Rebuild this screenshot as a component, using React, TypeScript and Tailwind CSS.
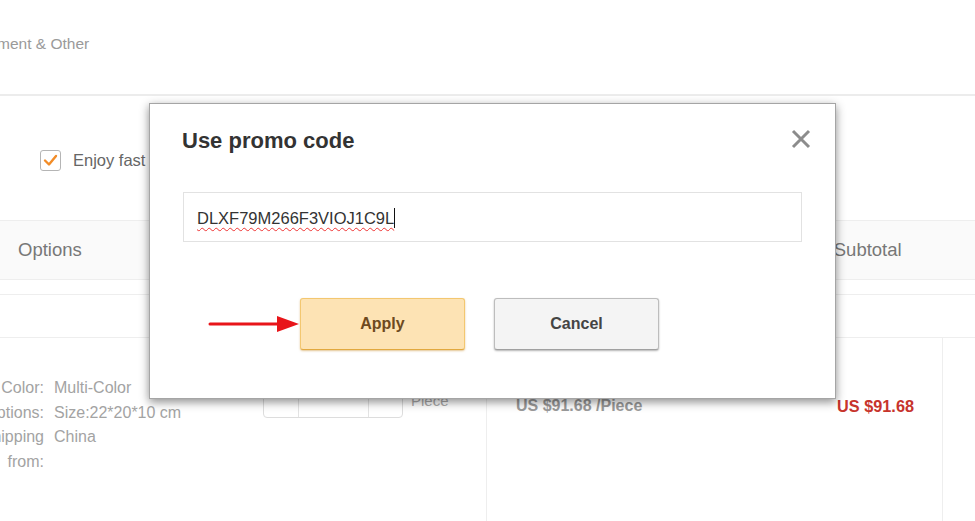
export default function App() {
  return (
    <div className="relative w-[975px] h-[521px] overflow-hidden bg-white font-['Liberation_Sans',Arial,sans-serif]">
      {/* page behind the dialog */}
      <div className="h-[96px] border-b-2 border-[#ececec] pt-[34px]">
        <p className="-ml-[3px] text-[15.5px] leading-[20px] text-[#9a9a9a]">ment &amp; Other</p>
      </div>

      <div className="h-[124px] flex items-center pl-[40px] pt-[4px]">
        <span className="w-[21px] h-[21px] rounded-[3px] border border-[#b5b5b5] flex items-center justify-center">
          <svg width="15" height="13" viewBox="0 0 15 13">
            <path d="M2 6.5 L6 10.5 L13 2" fill="none" stroke="#f28c28" strokeWidth="2.4" strokeLinecap="round" strokeLinejoin="round" />
          </svg>
        </span>
        <span className="ml-[12px] text-[16.5px] text-[#666]">Enjoy fast</span>
      </div>

      <div className="h-[60px] border-y border-[#eeeeee] bg-[#fafafa] flex items-center text-[18.5px] text-[#777]">
        <span className="ml-[18px]">Options</span>
        <span className="ml-[752px]">Subtotal</span>
      </div>
      <div className="h-[15px] border-b border-[#eeeeee]" />
      <div className="h-[43px] border-b border-[#eeeeee]" />

      <div className="flex h-[200px]">
        <div className="w-[486px] flex">
          <div className="w-[263px] pt-[38px] text-[16px] leading-[24.5px] text-[#a3a3a3]">
            <div className="flex">
              <span className="-ml-[46px] w-[90px] text-right">Color:</span>
              <span className="ml-[10px]">Multi-Color</span>
            </div>
            <div className="flex">
              <span className="-ml-[46px] w-[90px] text-right">Options:</span>
              <span className="ml-[10px] whitespace-nowrap">Size:22*20*10 cm</span>
            </div>
            <div className="flex">
              <span className="-ml-[46px] w-[90px] text-right">Shipping from:</span>
              <span className="ml-[10px]">China</span>
            </div>
          </div>
          <div className="pt-[50px] flex items-start">
            <div className="flex h-[30px] rounded-[4px] border border-[#dddddd]">
              <span className="w-[35px] border-r border-[#e3e3e3]" />
              <span className="w-[70px] border-r border-[#e3e3e3]" />
              <span className="w-[33px]" />
            </div>
            <span className="ml-[8px] mt-[2px] text-[15px] text-[#aaa]">Piece</span>
          </div>
        </div>
        <div className="w-[457px] border-x border-[#eeeeee] flex items-start pt-[56px]">
          <span className="ml-[29px] text-[16px] font-bold text-[#9a9a9a]">US $91.68 /Piece</span>
          <span className="ml-auto mr-[28px] text-[16.3px] font-bold text-[#c7342c]">US $91.68</span>
        </div>
        <div className="flex-1" />
      </div>

      {/* promo code dialog */}
      <div className="absolute left-[149px] top-[103px] w-[687px] h-[296px] bg-white border border-[#a5a5a5] shadow-[0_3px_9px_rgba(0,0,0,0.45)]">
        <div className="flex items-center justify-between pl-[32px] pr-[24px] pt-[24px]">
          <h2 className="text-[22px] leading-[26px] font-bold text-[#333]">Use promo code</h2>
          <svg width="20" height="20" viewBox="0 0 20 20" className="-mt-[4px]">
            <path d="M2 2 L18 18 M18 2 L2 18" stroke="#8c8c8c" strokeWidth="3" />
          </svg>
        </div>
        <div className="mx-[33px] mt-[38px] h-[50px] border border-[#e2e2e2] flex items-center pl-[13px] pt-[2px]">
          <span className="text-[16.5px] text-[#333] underline decoration-wavy decoration-[#e33] decoration-1 underline-offset-[3px]">
            DLXF79M266F3VIOJ1C9L
          </span>
          <span className="w-px h-[20px] bg-[#111]" />
        </div>
        <div className="flex gap-[29px] pl-[150px] mt-[56px]">
          <button className="w-[165px] h-[52px] rounded-[3px] bg-[#fde3b4] border border-[#f3c770] border-b-[#e2a93f] shadow-[0_1px_2px_rgba(200,140,40,0.5)] text-[16px] font-bold text-[#6e4a20]">
            Apply
          </button>
          <button className="w-[165px] h-[52px] rounded-[3px] bg-[#f4f4f4] border border-[#bdbdbd] border-b-[#a0a0a0] shadow-[0_1px_2px_rgba(0,0,0,0.3)] text-[16px] font-bold text-[#444]">
            Cancel
          </button>
        </div>
      </div>

      {/* annotation arrow */}
      <svg className="absolute left-[208px] top-[314px]" width="92" height="20" viewBox="0 0 92 20">
        <path d="M2 10 L72 10" stroke="#e8151a" strokeWidth="3" strokeLinecap="round" />
        <path d="M69 2 L91 10 L69 18 Z" fill="#e8151a" />
      </svg>
    </div>
  )
}
